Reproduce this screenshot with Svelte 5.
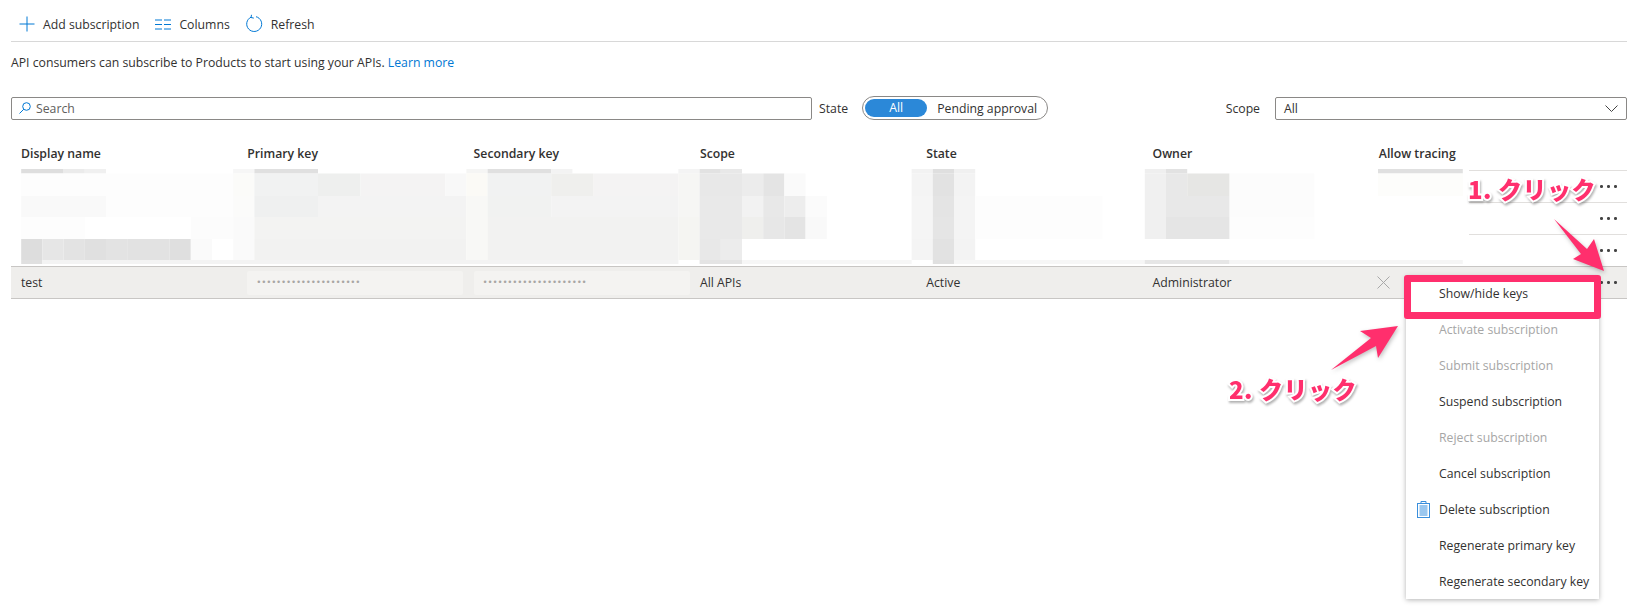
<script>
	const columns = ['Display name', 'Primary key', 'Secondary key', 'Scope', 'State', 'Owner', 'Allow tracing'];
	const menu = [
		{ label: 'Show/hide keys' },
		{ label: 'Activate subscription', disabled: true },
		{ label: 'Submit subscription', disabled: true },
		{ label: 'Suspend subscription' },
		{ label: 'Reject subscription', disabled: true },
		{ label: 'Cancel subscription' },
		{ label: 'Delete subscription', trash: true },
		{ label: 'Regenerate primary key' },
		{ label: 'Regenerate secondary key' }
	];
	const keyDots = '•'.repeat(21);

	// mosaic that hides the other rows: [first cell, last cell, colour] per band
	const CELL = 21.2;
	const bands = [
		{ y: 0, h: 4.5, runs: [[1, 3, '#dedede'], [3, 4, '#ebebeb'], [4, 5, '#f0f0f0'], [11, 12, '#f6f6f6'], [12, 15, '#e0e0e0'], [22, 23, '#f5f5f4'], [23, 26, '#e0e0e0'], [26, 27, '#f3f3f3'], [32, 33, '#f4f4f4'], [33, 34, '#e2e2e2'], [34, 35, '#e8e8e8'], [43, 44, '#f2f2f2'], [44, 45, '#dfdfdf'], [45, 46, '#f0f0f0'], [54, 55, '#efefef'], [55, 56, '#e2e2e2'], [65, 69, '#e0e0e0']] },
		{ y: 4.5, h: 22.5, runs: [[1, 11, '#fdfdfd'], [11, 12, '#fbfbf9'], [12, 15, '#f1f2f2'], [15, 17, '#eeefee'], [17, 21, '#f4f3f3'], [21, 22, '#f8f8f8'], [22, 23, '#fbfaf6'], [23, 26, '#f1f2f2'], [26, 28, '#efefed'], [28, 32, '#f4f3f3'], [32, 33, '#f6f6f4'], [33, 35, '#e8e8e8'], [35, 36, '#ececec'], [36, 37, '#e4e4e4'], [37, 38, '#fafafa'], [43, 44, '#f4f4f4'], [44, 45, '#e2e2e2'], [45, 46, '#f3f3f3'], [54, 55, '#f0f0f0'], [55, 56, '#e8e8e8'], [56, 58, '#e6e6e4'], [58, 62, '#fcfcfc'], [65, 69, '#fdfdfb']] },
		{ y: 27, h: 21, runs: [[1, 5, '#f9f9f9'], [5, 11, '#fdfdfd'], [11, 12, '#fbfbfa'], [12, 15, '#eff0f0'], [15, 22, '#f3f3f3'], [22, 23, '#f8f8f6'], [23, 26, '#f1f2f1'], [26, 32, '#f3f3f3'], [32, 33, '#f6f6f4'], [33, 35, '#e9e9e9'], [35, 36, '#f2f2f2'], [36, 37, '#e8e8e8'], [37, 38, '#ededed'], [38, 39, '#fbfbfb'], [43, 44, '#f5f5f5'], [44, 45, '#e4e4e4'], [45, 46, '#f4f4f4'], [46, 52, '#fdfdfd'], [54, 55, '#f0f0f0'], [55, 58, '#e8e8e8'], [58, 62, '#fcfcfc']] },
		{ y: 48, h: 22, runs: [[1, 4, '#fdfdfd'], [9, 11, '#fcfcfc'], [11, 12, '#fafafa'], [12, 22, '#f3f3f2'], [22, 23, '#f8f8f6'], [23, 32, '#f2f2f1'], [32, 33, '#f5f5f2'], [33, 35, '#e9e9e9'], [35, 36, '#efefed'], [36, 37, '#e7e7e7'], [37, 38, '#e4e4e4'], [38, 39, '#f9f9f9'], [43, 44, '#f5f5f5'], [44, 45, '#e5e5e5'], [45, 46, '#f4f4f4'], [46, 52, '#fdfdfd'], [54, 55, '#f0f0f0'], [55, 58, '#e5e5e5'], [58, 62, '#fdfdfd']] },
		{ y: 70, h: 21, runs: [[1, 2, '#dddddd'], [2, 3, '#e6e6e6'], [3, 4, '#e3e3e3'], [4, 5, '#e0e0e0'], [5, 6, '#e3e3e3'], [6, 8, '#e2e2e2'], [8, 9, '#dfdfdf'], [9, 10, '#fafafa'], [11, 12, '#fafafa'], [12, 22, '#f2f2f1'], [22, 23, '#f8f8f6'], [23, 32, '#f2f2f1'], [32, 33, '#f5f5f2'], [33, 34, '#e8e8e8'], [34, 35, '#ececec'], [43, 44, '#f4f4f4'], [44, 45, '#e2e2e2'], [45, 46, '#f3f3f3']] },
		{ y: 91, h: 4, runs: [[1, 2, '#e0e0e0'], [2, 32, '#f3f3f3'], [33, 35, '#e4e4e4'], [35, 43, '#f6f6f6'], [44, 45, '#e0e0e0'], [45, 54, '#f6f6f6'], [54, 58, '#e6e6e6'], [58, 69, '#f5f5f5']] }
	];
</script>

<div class="page">
	<div class="toolbar">
		<span class="tool">
			<svg width="16" height="16" viewBox="0 0 16 16"><path d="M8 .5v15M.5 8h15" stroke="#0078d4" fill="none"/></svg>
			Add subscription
		</span>
		<span class="tool">
			<svg width="16" height="11" viewBox="0 0 16 11"><path d="M0 1h7M0 5.500h7M0 10h7M9 1h7M9 5.500h7M9 10h7" stroke="#0078d4" fill="none"/></svg>
			Columns
		</span>
		<span class="tool">
			<svg class="refresh" width="17" height="18" viewBox="0 0 17 18"><path d="M5 3.200a7.500 7.500 0 1 0 5-.5M5.500.8 5 3.500l2.800.6" stroke="#0078d4" fill="none"/></svg>
			Refresh
		</span>
	</div>

	<p class="intro">API consumers can subscribe to Products to start using your APIs. <a href="#learn">Learn more</a></p>

	<div class="filters">
		<div class="search">
			<svg width="12" height="12" viewBox="0 0 12 12"><circle cx="7.500" cy="4.500" r="3.800" stroke="#0078d4" fill="none"/><path d="M4.800 7.200.5 11.500" stroke="#0078d4" fill="none"/></svg>
			<span>Search</span>
		</div>
		<span class="state-label">State</span>
		<div class="pill">
			<span class="pill-on">All</span>
			<span class="pill-off">Pending approval</span>
		</div>
		<span class="scope-label">Scope</span>
		<div class="select">
			<span>All</span>
			<svg width="13" height="7" viewBox="0 0 13 7"><path d="M.5.500 6.500 6.500 12.500.5" stroke="#444" fill="none"/></svg>
		</div>
	</div>

	<div class="table">
		<div class="head">
			{#each columns as col}
				<span>{col}</span>
			{/each}
		</div>
		{#each [0, 1, 2] as row (row)}
			<div class="row">
				<span class="more"><i></i><i></i><i></i></span>
			</div>
		{/each}
		<div class="row current">
			<span class="cell">test</span>
			<span class="cell"><span class="key">{keyDots}</span></span>
			<span class="cell"><span class="key">{keyDots}</span></span>
			<span class="cell">All APIs</span>
			<span class="cell">Active</span>
			<span class="cell">Administrator</span>
			<span class="cell">
				<svg class="cross" width="13" height="13" viewBox="0 0 13 13"><path d="M.5.500l12 12M12.500.5l-12 12" stroke="#a8a8a8" fill="none"/></svg>
			</span>
			<span class="more"><i></i><i></i><i></i></span>
		</div>
	</div>

	<svg class="mosaic" width="1469" height="95" viewBox="0 0 1469 95">
		<rect x="10" width="1459" height="95" fill="#fff"/>
		{#each bands as band}
			{#each band.runs as run}
				<rect x={run[0] * CELL} y={band.y} width={(run[1] - run[0]) * CELL} height={band.h} fill={run[2]}/>
			{/each}
		{/each}
	</svg>

	<ul class="menu">
		{#each menu as item}
			<li class:disabled={item.disabled}>
				{#if item.trash}
					<svg class="trash" width="13" height="17" viewBox="0 0 13 17"><rect x=".5" y="2.500" width="12" height="14" fill="none" stroke="#3a8fdc"/><rect x="2.500" y="4" width="8" height="11" fill="#9ac7ef"/><path d="M0 2.500h13M4 2.500V.5h5v2" fill="none" stroke="#3a8fdc"/></svg>
				{/if}
				{item.label}
			</li>
		{/each}
	</ul>

	<div class="highlight"></div>

	<svg class="arrows" width="1633" height="608" viewBox="0 0 1633 608">
		<path d="M1554 219 1587 249 1594 239 1604 271 1573 259 1581 254Z"/>
		<path d="M1331 370 1371 338 1360 331 1398 326 1378 358 1376 346Z"/>
	</svg>
	<span class="note note-one">1. クリック</span>
	<span class="note note-two">2. クリック</span>
</div>

<style>
	:global(body) {
		margin: 0;
		background: #fff;
	}

	.page {
		position: relative;
		box-sizing: border-box;
		width: 1633px;
		height: 608px;
		overflow: hidden;
		padding: 0 6px 0 11px;
		font-family: 'Open Sans', 'Noto Sans', sans-serif;
		font-size: 12.25px;
		color: #323130;
	}

	.toolbar {
		box-sizing: border-box;
		display: flex;
		align-items: center;
		height: 42px;
		padding: 7px 0 0 8px;
		gap: 16px;
		border-bottom: 1px solid #d8d8d8;
	}

	.tool {
		display: flex;
		align-items: center;
		gap: 8px;
	}

	.refresh {
		margin-top: -3px;
	}

	.intro {
		margin: 12px 0 0;
		line-height: 18px;
	}

	.intro a {
		color: #0078d4;
		text-decoration: none;
	}

	.filters {
		display: flex;
		align-items: center;
		height: 24px;
		margin-top: 24px;
	}

	.search {
		box-sizing: border-box;
		display: flex;
		align-items: center;
		gap: 5px;
		width: 801px;
		height: 23px;
		padding-left: 7px;
		border: 1px solid #8a8886;
		border-radius: 2px;
		color: #605e5c;
	}

	.state-label {
		margin-left: 7px;
	}

	.pill {
		box-sizing: border-box;
		display: flex;
		align-items: center;
		width: 186px;
		height: 24px;
		margin-left: 14px;
		padding: 0 2px;
		border: 1px solid #8a8886;
		border-radius: 12px;
	}

	.pill-on {
		width: 62px;
		height: 18px;
		line-height: 18px;
		text-align: center;
		border-radius: 9px;
		background: #2b88d8;
		color: #fff;
	}

	.pill-off {
		margin-left: 10px;
		white-space: nowrap;
	}

	.scope-label {
		margin-left: auto;
	}

	.select {
		box-sizing: border-box;
		display: flex;
		align-items: center;
		justify-content: space-between;
		width: 352px;
		height: 23px;
		margin-left: 15px;
		padding: 0 8px;
		border: 1px solid #8a8886;
		border-radius: 2px;
	}

	.table {
		margin-top: 23px;
	}

	.head {
		display: grid;
		grid-template-columns: repeat(7, 226.3px);
		height: 27px;
		font-weight: 600;
	}

	.head span {
		padding: 2px 0 0 10px;
	}

	.row {
		box-sizing: border-box;
		display: grid;
		grid-template-columns: repeat(7, 226.3px) 1fr;
		align-items: center;
		height: 32px;
		border-top: 1px solid #e1dfdd;
	}

	.current {
		height: 33px;
		background: #efeeec;
		border-top-color: #c8c6c4;
		border-bottom: 1px solid #c8c6c4;
	}

	.cell {
		padding-left: 10px;
		white-space: nowrap;
	}

	.key {
		display: block;
		width: 216px;
		height: 24px;
		padding-left: 10px;
		box-sizing: border-box;
		line-height: 23px;
		background: #f4f3f1;
		color: #a8a6a4;
		font-family: 'Liberation Sans', sans-serif;
		font-size: 9px;
		letter-spacing: 1.800px;
		border-radius: 2px;
	}

	.cross {
		display: block;
		margin-left: -2px;
	}

	.more {
		grid-column: 8;
		display: flex;
		gap: 4.500px;
		padding-left: 5px;
	}

	.more i {
		width: 2.500px;
		height: 2.500px;
		border-radius: 50%;
		background: #444;
	}

	.mosaic {
		position: absolute;
		left: 0;
		top: 169px;
	}

	.menu {
		position: absolute;
		left: 1406px;
		top: 276px;
		box-sizing: border-box;
		width: 193px;
		height: 323px;
		margin: 0;
		padding: 0;
		list-style: none;
		background: #fff;
		box-shadow: 0 1px 5px rgba(0, 0, 0, 0.3);
	}

	.menu li {
		position: relative;
		height: 36px;
		line-height: 36px;
		padding-left: 33px;
		white-space: nowrap;
	}

	.menu .disabled {
		color: #a6a6a6;
	}

	.trash {
		position: absolute;
		left: 11px;
		top: 9px;
	}

	.highlight {
		position: absolute;
		left: 1404px;
		top: 275px;
		box-sizing: border-box;
		width: 197px;
		height: 44px;
		border: 7px solid #ff2f6d;
		border-radius: 3px;
	}

	.arrows {
		position: absolute;
		left: 0;
		top: 0;
		pointer-events: none;
		fill: #ff2f6d;
		filter: drop-shadow(1px 2px 2px rgba(0, 0, 0, 0.25));
	}

	.note {
		position: absolute;
		font-family: 'Noto Sans CJK JP', sans-serif;
		font-weight: 900;
		font-size: 24px;
		letter-spacing: 0.5px;
		line-height: 30px;
		color: #ff2f6d;
		white-space: nowrap;
		-webkit-text-stroke: 4px #fff;
		paint-order: stroke fill;
		filter: drop-shadow(1px 2px 1px rgba(0, 0, 0, 0.3));
	}

	.note-one {
		left: 1468px;
		top: 174px;
	}

	.note-two {
		left: 1229px;
		top: 374px;
	}
</style>
